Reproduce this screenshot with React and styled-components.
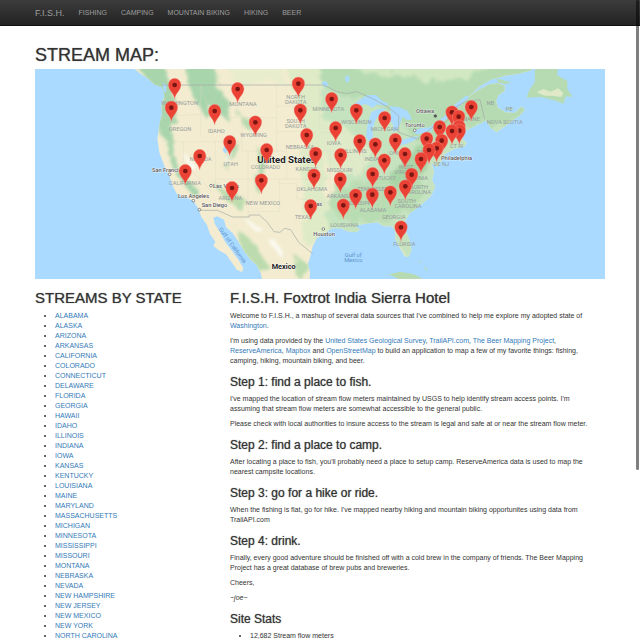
import React from "react";
import styled, { createGlobalStyle } from "styled-components";

const GlobalStyle = createGlobalStyle`
  * { box-sizing: border-box; }
  html { scrollbar-width: none; }
  body {
    margin: 0;
    background: #fff;
    color: #333;
    font-family: "Helvetica Neue", "Liberation Sans", Arial, sans-serif;
    font-size: 7px;
    line-height: 10px;
  }
  h1, h2, h3 {
    font-weight: 500;
    text-shadow: 0 0 1px rgba(51, 51, 51, 0.7);
  }
`;

const Navbar = styled.nav`
  display: flex;
  align-items: center;
  gap: 14px;
  height: 26px;
  padding: 0 35px;
  background: linear-gradient(#3c3c3c, #222);
  border-bottom: 1px solid #111;
`;

const NavLink = styled.a`
  color: #9d9d9d;
  font-size: ${(p) => (p.$brand ? "9px" : "7px")};
  text-decoration: none;
  white-space: nowrap;
`;

const Page = styled.main`
  padding: 9px 35px 0;
`;

const PageTitle = styled.h1`
  margin: 10px 0 4px;
  font-size: 18px;
  line-height: 20px;
`;

const SectionTitle = styled.h2`
  margin: 10px 0 5px;
  font-size: 15px;
  line-height: 17px;
`;

const StepTitle = styled.h3`
  margin: 10px 0 5px;
  font-size: 12px;
  line-height: 13px;
`;

const Text = styled.p`
  margin: 0 0 5px;
  padding-right: 5px;
`;

const List = styled.ul`
  margin: 0 0 5px;
  padding-left: 20px;
`;

const Link = styled.a`
  color: #337ab7;
  text-decoration: none;
`;

const MapFrame = styled.div`
  height: 210px;
  background: #aadaff;
  overflow: hidden;
`;

const MapDrawing = styled.svg`
  display: block;
  width: 100%;
  height: 100%;
`;

const StateLabel = styled.text`
  fill: #959c9c;
  font: 17px Roboto, sans-serif;
  text-anchor: middle;
`;

const CityLabel = styled.text`
  fill: #555;
  stroke: #fff;
  stroke-width: 2px;
  paint-order: stroke;
  font: 500 17px Roboto, sans-serif;
`;

const CountryLabel = styled.text`
  fill: #222;
  stroke: #fff;
  stroke-width: 2px;
  paint-order: stroke;
  font: 700 ${(p) => (p.$large ? "29px" : "22px")} Roboto, sans-serif;
`;

const WaterLabel = styled.text`
  fill: #5b93cd;
  font: 17px Roboto, sans-serif;
  text-anchor: middle;
`;

const Columns = styled.div`
  display: grid;
  grid-template-columns: 12fr 25fr;
  gap: 15px;
`;

const ScrollThumb = styled.div`
  position: fixed;
  top: 0;
  right: 1px;
  width: 3px;
  height: 470px;
  border-radius: 2px;
  background: rgba(0, 0, 0, 0.5);
`;

const navItems = ["FISHING", "CAMPING", "MOUNTAIN BIKING", "HIKING", "BEER"];

const states = [
  "ALABAMA", "ALASKA", "ARIZONA", "ARKANSAS", "CALIFORNIA", "COLORADO", "CONNECTICUT",
  "DELAWARE", "FLORIDA", "GEORGIA", "HAWAII", "IDAHO", "ILLINOIS", "INDIANA", "IOWA",
  "KANSAS", "KENTUCKY", "LOUISIANA", "MAINE", "MARYLAND", "MASSACHUSETTS", "MICHIGAN",
  "MINNESOTA", "MISSISSIPPI", "MISSOURI", "MONTANA", "NEBRASKA", "NEVADA",
  "NEW HAMPSHIRE", "NEW JERSEY", "NEW MEXICO", "NEW YORK", "NORTH CAROLINA",
];

const stateLabels = [
  ["WASHINGTON", 149, 108], ["OREGON", 150, 186], ["IDAHO", 259, 192], ["MONTANA", 339, 110],
  ["NORTH", 497, 90], ["DAKOTA", 497, 105], ["SOUTH", 497, 161], ["DAKOTA", 497, 176],
  ["WYOMING", 371, 203], ["NEVADA", 212, 277], ["UTAH", 302, 292], ["COLORADO", 407, 301],
  ["CALIFORNIA", 165, 348], ["ARIZONA", 301, 394], ["NEW MEXICO", 399, 407],
  ["NEBRASKA", 510, 239], ["KANSAS", 529, 306], ["OKLAHOMA", 546, 366], ["TEXAS", 520, 451],
  ["MINNESOTA", 595, 127], ["IOWA", 611, 227], ["MISSOURI", 629, 309], ["ARKANSAS", 633, 386],
  ["LOUISIANA", 643, 474], ["WISCONSIN", 679, 164], ["ILLINOIS", 677, 251],
  ["MICHIGAN", 763, 185], ["INDIANA", 737, 275], ["OHIO", 797, 258], ["WEST", 828, 299],
  ["VIRGINIA", 828, 314], ["KENTUCKY", 755, 333], ["TENNESSEE", 728, 365],
  ["VIRGINIA", 859, 334], ["NORTH", 866, 360], ["CAROLINA", 862, 375],
  ["SOUTH", 830, 402], ["CAROLINA", 834, 417], ["MISSISSIPPI", 681, 407],
  ["ALABAMA", 729, 430], ["GEORGIA", 791, 449], ["FLORIDA", 823, 532], ["MAINE", 1023, 157],
  ["NB", 1081, 109], ["PE", 1137, 125], ["NOVA SCOTIA", 1124, 164], ["CT RI", 980, 237],
  ["DE NJ", 934, 292], ["PA", 871, 254],
];

const pins = [
  [134, 48], [124, 116], [323, 60], [505, 44], [254, 126], [511, 124], [376, 160],
  [605, 90], [679, 124], [764, 147], [617, 177], [299, 219], [530, 198], [209, 261],
  [410, 243], [689, 216], [736, 226], [796, 213], [166, 306], [557, 254], [632, 258],
  [763, 274], [394, 334], [306, 357], [552, 319], [631, 330], [728, 315], [542, 411],
  [640, 409], [677, 379], [727, 377], [781, 370], [813, 475], [1024, 114], [966, 130],
  [986, 143], [987, 173], [929, 174], [988, 185], [966, 186], [890, 209], [935, 215],
  [920, 238], [897, 243], [825, 255], [873, 270], [845, 317], [826, 352],
];

const LAND =
  "M8 -5 L28 12 55 30 72 46 96 55 103 80 94 110 96 132 88 168 82 210 88 250 102 288 118 320 128 350 140 374 165 384 190 395 206 420 214 444 231 468 240 495 256 518 250 530 266 544 288 556 305 580 320 602 336 609 340 597 325 572 306 546 286 520 270 490 255 466 250 446 262 442 282 452 288 474 308 492 326 520 344 548 362 572 380 588 392 612 398 640 L538 640 540 610 534 585 542 558 548 532 560 508 582 494 606 478 634 478 650 486 676 490 690 482 676 470 704 464 742 460 762 472 786 472 796 486 796 510 808 534 824 562 836 564 844 542 838 512 826 484 824 458 838 434 870 410 902 382 916 354 906 332 912 308 904 282 922 294 934 276 944 256 972 240 1004 232 1010 222 996 208 1000 188 1030 174 1058 160 1068 154 1082 176 1100 190 1122 174 1146 156 1168 140 1184 124 1176 112 1154 132 1126 130 1104 116 1098 96 1106 78 1124 66 1124 50 1104 42 1078 46 1040 66 1014 86 1046 54 1082 32 1126 20 1160 16 1198 6 1220 -5 Z";

const borders = [
  "M96 48 H582 L620 68 650 74 680 68 730 90 770 112 806 140 806 190 862 210 912 172 948 160 980 112 1010 96 1050 92 1064 150",
  "M206 424 H262 L308 444 H358 V438 H388 L412 460 432 488 450 490 464 478 482 482 506 520 548 554",
];

const stateLines =
  "M104 128 L148 140 212 136 M212 48 V204 M96 218 H336 M160 218 V278 L246 370 M256 218 V350 M212 48 L232 108 270 136 312 146 M312 146 H440 M336 146 V246 M336 246 H470 M440 48 V250 M440 112 H568 M440 188 H560 M354 246 V438 M354 330 H600 M470 246 V330 M256 330 H354 M448 330 V428 H354 M448 344 H500 V388 L594 402 M470 268 H572 M568 48 V180 M568 190 H648 M572 246 H650 M600 246 V402 M600 400 H660 M660 400 V462 M650 246 L690 330 660 400 M700 240 V310 M750 240 V294 M690 346 H800 M690 360 H850 M705 360 V464 M752 360 V456 M752 450 H820 M790 360 L832 420 M840 240 V220 H920 M840 280 H910 M950 164 V230 M976 148 V230";

function Pin({ x, y }) {
  return (
    <g transform={`translate(${x} ${y})`}>
      <path
        d="M0 42 C-3 22 -19 17 -19 -1 A19 19 0 1 1 19 -1 C19 17 3 22 0 42Z"
        fill="#ea4335"
        stroke="#f6a69e"
        strokeWidth="1"
      />
      <circle r="7" fill="#7a1512" />
    </g>
  );
}

function StreamMap() {
  return (
    <MapFrame>
      <MapDrawing
        viewBox="-285 0 1710 630"
        preserveAspectRatio="xMidYMid slice"
        role="img"
        aria-label="Map of stream locations in the United States"
      >
        <defs>
          <clipPath id="land"><path d={LAND} /></clipPath>
          <filter id="soft" x="-20%" y="-20%" width="140%" height="140%">
            <feTurbulence type="fractalNoise" baseFrequency="0.03" numOctaves="3" seed="4" />
            <feDisplacementMap in="SourceGraphic" scale="50" />
            <feGaussianBlur stdDeviation="4" />
          </filter>
        </defs>
        <path d={LAND} fill="#f3ecd0" />
        <g clipPath="url(#land)">
          <g filter="url(#soft)">
            <path d="M570 -30 H1260 V260 L900 460 850 600 780 500 560 520 590 420 640 330 620 240 580 150Z" fill="#c6e3bf" />
            <path d="M570 -30 H1260 V150 L1000 180 860 220 800 140 720 100 640 80 580 50Z" fill="#b6dbb3" />
            <path d="M460 -30 H570 L590 500 530 530 510 380 530 200Z" fill="#deebc6" />
            <path d="M560 150 L640 170 730 250 690 320 600 300 570 220Z" fill="#dfebc8" />
            <path d="M620 360 L850 300 890 330 850 420 760 460 640 460 590 400Z" fill="#b9ddb2" />
            <path d="M770 320 L850 240 940 190 920 250 860 320 790 370Z" fill="#a9d4a6" />
            <path d="M160 -30 H250 L270 70 300 100 290 150 250 120 225 150 180 60Z" fill="#a9d5ac" />
            <path d="M0 -30 H90 L130 60 140 130 120 200 150 310 210 370 185 380 125 290 105 210 85 190 95 80Z" fill="#a9d5ac" />
            <path d="M325 130 L365 155 365 190 335 165Z M300 215 L325 225 310 270 285 300 280 260Z M385 235 L410 270 390 365 370 360 380 300Z" fill="#b8dab0" />
            <path d="M255 350 L345 390 335 425 290 395Z M310 470 L370 520 420 600 390 610 340 550Z M500 560 L540 590 520 640 490 610Z" fill="#bcdcae" />
            <path d="M280 -30 H460 V40 H310Z" fill="#e8edcd" />
            <path d="M700 -20 H1100 L1020 30 880 35 800 15 680 12Z" fill="#d2e8c2" />
            <path d="M150 240 L175 260 195 300 180 300Z M280 265 L300 240 295 290Z M350 455 L390 470 400 490 370 480Z M425 525 L445 520 455 560 440 555Z" fill="#fbfaf2" />
          </g>
          <path d={stateLines} fill="none" stroke="#dcd6c6" strokeWidth="1" />
        </g>
        <g fill="#aadaff">
          <path d="M672 106 L690 92 712 78 738 78 756 96 776 104 770 112 742 106 728 116 706 104 690 110Z" />
          <path d="M724 130 L744 120 768 118 752 134 738 150 728 178 728 206 718 218 708 204 712 170 718 146Z" />
          <path d="M778 112 L806 114 832 126 846 150 832 154 818 142 810 164 802 184 788 188 790 166 778 154 784 136Z" />
          <path d="M796 220 L818 212 838 206 866 200 854 214 830 224 806 230Z" />
          <path d="M850 186 L872 178 904 174 908 184 884 192 858 196Z" />
          <path d="M902 172 L944 142 976 106 1008 80 1018 84 982 118 950 150 908 178Z" />
          <path d="M98 42 L110 48 108 72 100 66Z" />
          <ellipse cx="652" cy="30" rx="7" ry="9" />
          <path d="M574 40 L588 36 596 48 582 54Z" />
          <path d="M278 244 L284 232 292 244 286 254Z" />
        </g>
        <g fill="#b6dbb3">
          <path d="M1215 -5 H1284 L1282 18 1312 36 1312 60 1328 84 1308 82 1300 104 1272 94 1232 84 1190 86 1196 66 1214 40Z" />
          <path d="M1100 28 L1142 40 1128 46 1104 40Z M1126 118 L1154 116 1140 124Z" />
          <path d="M776 616 L812 608 852 616 898 640 826 640Z" />
          <path d="M870 574 L876 584 868 578Z M882 588 L892 602 888 606Z" />
        </g>
        <path d="M1220 70 L1240 60 1262 68 1284 58 1300 72 1294 84 1268 80 1244 80Z" fill="#dfe9c8" />
        {borders.map((d) => (
          <path key={d} d={d} fill="none" stroke="#a2aaa3" strokeWidth="2" />
        ))}
        {stateLabels.map(([name, x, y]) => (
          <StateLabel key={`${name}${x}`} x={x} y={y}>{name}</StateLabel>
        ))}
        <WaterLabel x="670" y="564">Gulf of</WaterLabel>
        <WaterLabel x="670" y="580">Mexico</WaterLabel>
        <WaterLabel transform="translate(303 532) rotate(54)">Gulf of California</WaterLabel>
        <CountryLabel $large x="382" y="281">United States</CountryLabel>
        <CountryLabel x="425" y="600">Mexico</CountryLabel>
        <CityLabel x="66" y="308">San Francisco</CityLabel>
        <CityLabel x="144" y="386">Los Angeles</CityLabel>
        <CityLabel x="215" y="414">San Diego</CityLabel>
        <CityLabel x="249" y="356">Las Vegas</CityLabel>
        <CityLabel x="530" y="411">Dallas</CityLabel>
        <CityLabel x="550" y="500">Houston</CityLabel>
        <CityLabel x="858" y="133">Ottawa</CityLabel>
        <CityLabel x="825" y="175">Toronto</CityLabel>
        <CityLabel x="933" y="274">Philadelphia</CityLabel>
        <g fill="#fff" stroke="#555" strokeWidth="2">
          <circle cx="119" cy="316" r="4" />
          <circle cx="190" cy="395" r="4" />
          <circle cx="208" cy="422" r="4" />
          <circle cx="243" cy="350" r="4" />
          <circle cx="580" cy="480" r="4" />
          <circle cx="854" cy="184" r="4" />
          <circle cx="916" cy="141" r="4" fill="#555" />
        </g>
        {pins.map(([x, y]) => <Pin key={`${x}-${y}`} x={x} y={y} />)}
      </MapDrawing>
    </MapFrame>
  );
}

export default function App() {
  return (
    <>
      <GlobalStyle />
      <Navbar>
        <NavLink $brand href="#home">F.I.S.H.</NavLink>
        {navItems.map((item) => (
          <NavLink key={item} href="#nav">{item}</NavLink>
        ))}
      </Navbar>
      <Page>
        <PageTitle>STREAM MAP:</PageTitle>
        <StreamMap />
        <Columns>
          <section>
            <SectionTitle>STREAMS BY STATE</SectionTitle>
            <List>
              {states.map((state) => (
                <li key={state}><Link href="#state">{state}</Link></li>
              ))}
            </List>
          </section>
          <section>
            <SectionTitle>F.I.S.H. Foxtrot India Sierra Hotel</SectionTitle>
            <Text>
              Welcome to F.I.S.H., a mashup of several data sources that I've combined to help me
              explore my adopted state of <Link href="#washington">Washington</Link>.
            </Text>
            <Text>
              I'm using data provided by the <Link href="#usgs">United States Geological Survey</Link>,{" "}
              <Link href="#trail">TrailAPI.com</Link>, <Link href="#beer">The Beer Mapping Project</Link>,{" "}
              <Link href="#reserve">ReserveAmerica</Link>, <Link href="#mapbox">Mapbox</Link> and{" "}
              <Link href="#osm">OpenStreetMap</Link> to build an application to map a few of my
              favorite things: fishing, camping, hiking, mountain biking, and beer.
            </Text>
            <StepTitle>Step 1: find a place to fish.</StepTitle>
            <Text>
              I've mapped the location of stream flow meters maintained by USGS to help identify
              stream access points. I'm assuming that stream flow meters are somewhat accessible to
              the general public.
            </Text>
            <Text>
              Please check with local authorities to insure access to the stream is legal and safe
              at or near the stream flow meter.
            </Text>
            <StepTitle>Step 2: find a place to camp.</StepTitle>
            <Text>
              After locating a place to fish, you'll probably need a place to setup camp.
              ReserveAmerica data is used to map the nearest campsite locations.
            </Text>
            <StepTitle>Step 3: go for a hike or ride.</StepTitle>
            <Text>
              When the fishing is flat, go for hike. I've mapped nearby hiking and mountain biking
              opportunites using data from TrailAPI.com
            </Text>
            <StepTitle>Step 4: drink.</StepTitle>
            <Text>
              Finally, every good adventure should be finished off with a cold brew in the company
              of friends. The Beer Mapping Project has a great database of brew pubs and breweries.
            </Text>
            <Text>Cheers,</Text>
            <Text><em>~joe~</em></Text>
            <StepTitle>Site Stats</StepTitle>
            <List>
              <li>12,682 Stream flow meters</li>
            </List>
          </section>
        </Columns>
      </Page>
      <ScrollThumb />
    </>
  );
}
